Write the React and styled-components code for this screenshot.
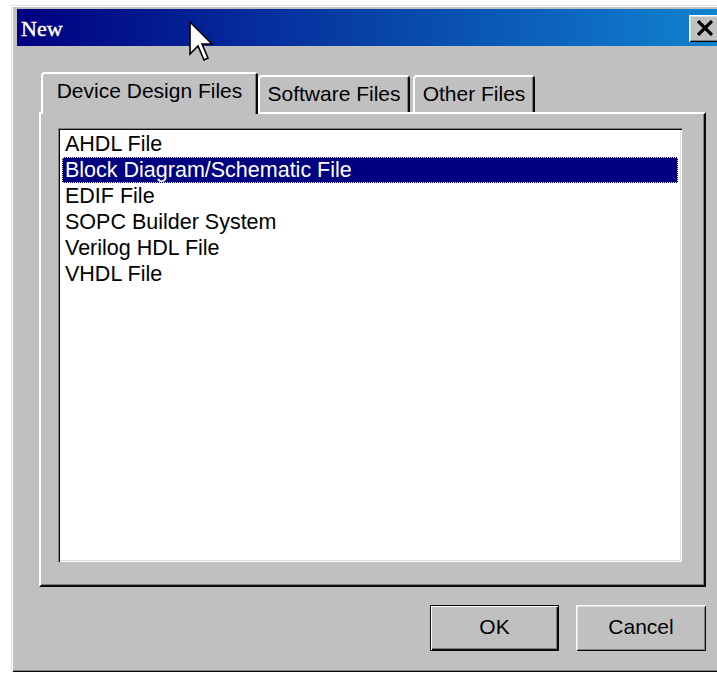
import React from "react";
import styled, { createGlobalStyle } from "styled-components";

const Global = createGlobalStyle`
  html, body { margin: 0; padding: 0; background: #ffffff; overflow: hidden; }
  body { font-family: "Liberation Sans", Arial, sans-serif; }
`;

const Window = styled.div`
  position: relative;
  box-sizing: border-box;
  margin: 5px 0 0 11px;
  width: 720px;
  height: 667px;
  padding: 4px 6px 0 6px;
  background: #c0c0c0;
  box-shadow: inset 1px 1px #dfdfdf, inset 2px 2px #ffffff,
    inset -1px -1px #0a0a0a, inset -2px -2px #808080;
  display: flex;
  flex-direction: column;
`;

const TitleBar = styled.div`
  height: 37px;
  display: flex;
  align-items: center;
  justify-content: space-between;
  padding: 0 4px;
  background: linear-gradient(90deg, #000080 0%, #1084d0 100%);
`;

const Title = styled.span`
  font-family: "Liberation Serif", "Times New Roman", serif;
  font-size: 22px;
  color: #ffffff;
  margin-top: 2px;
  -webkit-text-stroke: 0.4px #ffffff;
`;

const CloseButton = styled.div`
  box-sizing: border-box;
  width: 32px;
  height: 27px;
  margin-top: 1px;
  background: #c0c0c0;
  display: flex;
  align-items: center;
  justify-content: center;
  box-shadow: inset 1px 1px #ffffff, inset -1px -1px #0a0a0a,
    inset 2px 2px #dfdfdf, inset -2px -2px #808080;
`;

const Content = styled.div`
  padding: 26px 0 0 22px;
  display: flex;
  flex-direction: column;
`;

const TabStrip = styled.div`
  display: flex;
  align-items: flex-end;
  height: 40px;
  padding-left: 2px;
  position: relative;
  z-index: 1;
`;

const Tab = styled.div`
  box-sizing: border-box;
  width: ${(p) => p.$w}px;
  height: ${(p) => (p.$active ? 42 : 37)}px;
  margin-left: ${(p) => p.$gap || 0}px;
  margin-bottom: ${(p) => (p.$active ? -2 : 0)}px;
  padding-top: 5px;
  text-align: center;
  font-size: 21px;
  line-height: 24px;
  color: #000;
  background: #c0c0c0;
  border-top: 2px solid #ffffff;
  border-left: 2px solid #ffffff;
  border-right: 2px solid #0a0a0a;
  border-radius: 4px 4px 0 0;
  box-shadow: inset -1px 0 #808080;
  white-space: nowrap;
`;

const Panel = styled.div`
  box-sizing: border-box;
  width: 667px;
  height: 475px;
  padding: 14px 22px 23px 17px;
  border-top: 2px solid #ffffff;
  border-left: 2px solid #ffffff;
  border-right: 2px solid #0a0a0a;
  border-bottom: 2px solid #0a0a0a;
  box-shadow: inset -1px -1px #808080;
  display: flex;
`;

const ListBox = styled.div`
  box-sizing: border-box;
  flex: 1;
  background: #ffffff;
  padding: 3px 4px;
  box-shadow: inset 1px 1px #808080, inset 2px 2px #0a0a0a,
    inset -1px -1px #ffffff, inset -2px -2px #dfdfdf;
`;

const Row = styled.div`
  height: 26px;
  line-height: 26px;
  padding-left: 3px;
  font-size: 21.5px;
  white-space: nowrap;
  color: ${(p) => (p.$selected ? "#ffffff" : "#000000")};
  background: ${(p) => (p.$selected ? "#000080" : "transparent")};
  outline: ${(p) => (p.$selected ? "1px dotted #ffff80" : "none")};
  outline-offset: -1px;
`;

const ButtonRow = styled.div`
  width: 667px;
  display: flex;
  justify-content: flex-end;
  gap: 17px;
  margin-top: 18px;
`;

const Button = styled.div`
  box-sizing: border-box;
  width: ${(p) => p.$w}px;
  height: 46px;
  display: flex;
  align-items: center;
  justify-content: center;
  font-size: 21px;
  color: #000;
  background: #c0c0c0;
  border: ${(p) => (p.$default ? "1px solid #0a0a0a" : "none")};
  box-shadow: ${(p) =>
    p.$default
      ? "inset 1px 1px #ffffff, inset -1px -1px #0a0a0a, inset -2px -2px #808080"
      : "inset 1px 1px #ffffff, inset -1px -1px #0a0a0a, inset 2px 2px #dfdfdf, inset -2px -2px #808080"};
  padding-bottom: 2px;
`;

const Pointer = styled.svg`
  position: absolute;
  left: 178px;
  top: 16px;
`;

const files = [
  "AHDL File",
  "Block Diagram/Schematic File",
  "EDIF File",
  "SOPC Builder System",
  "Verilog HDL File",
  "VHDL File",
];

export default function App() {
  return (
    <>
      <Global />
      <Window>
        <TitleBar>
          <Title>New</Title>
          <CloseButton>
            <svg width="18" height="16" viewBox="0 0 18 16">
              <path d="M2 1 L16 15 M16 1 L2 15" stroke="#000" strokeWidth="3.2" />
            </svg>
          </CloseButton>
        </TitleBar>
        <Content>
          <TabStrip>
            <Tab $active $w={217}>Device Design Files</Tab>
            <Tab $w={152}>Software Files</Tab>
            <Tab $w={122} $gap={3}>Other Files</Tab>
          </TabStrip>
          <Panel>
            <ListBox>
              {files.map((f, i) => (
                <Row key={f} $selected={i === 1}>
                  {f}
                </Row>
              ))}
            </ListBox>
          </Panel>
          <ButtonRow>
            <Button $default $w={129}>OK</Button>
            <Button $w={130}>Cancel</Button>
          </ButtonRow>
        </Content>
        <Pointer width="26" height="42" viewBox="0 0 26 42">
          <path
            d="M1 1 L1 33 L9 25 L15 39 L19 37 L13 23 L23 23 Z"
            fill="#ffffff"
            stroke="#000000"
            strokeWidth="1.6"
            strokeLinejoin="miter"
          />
        </Pointer>
      </Window>
    </>
  );
}
